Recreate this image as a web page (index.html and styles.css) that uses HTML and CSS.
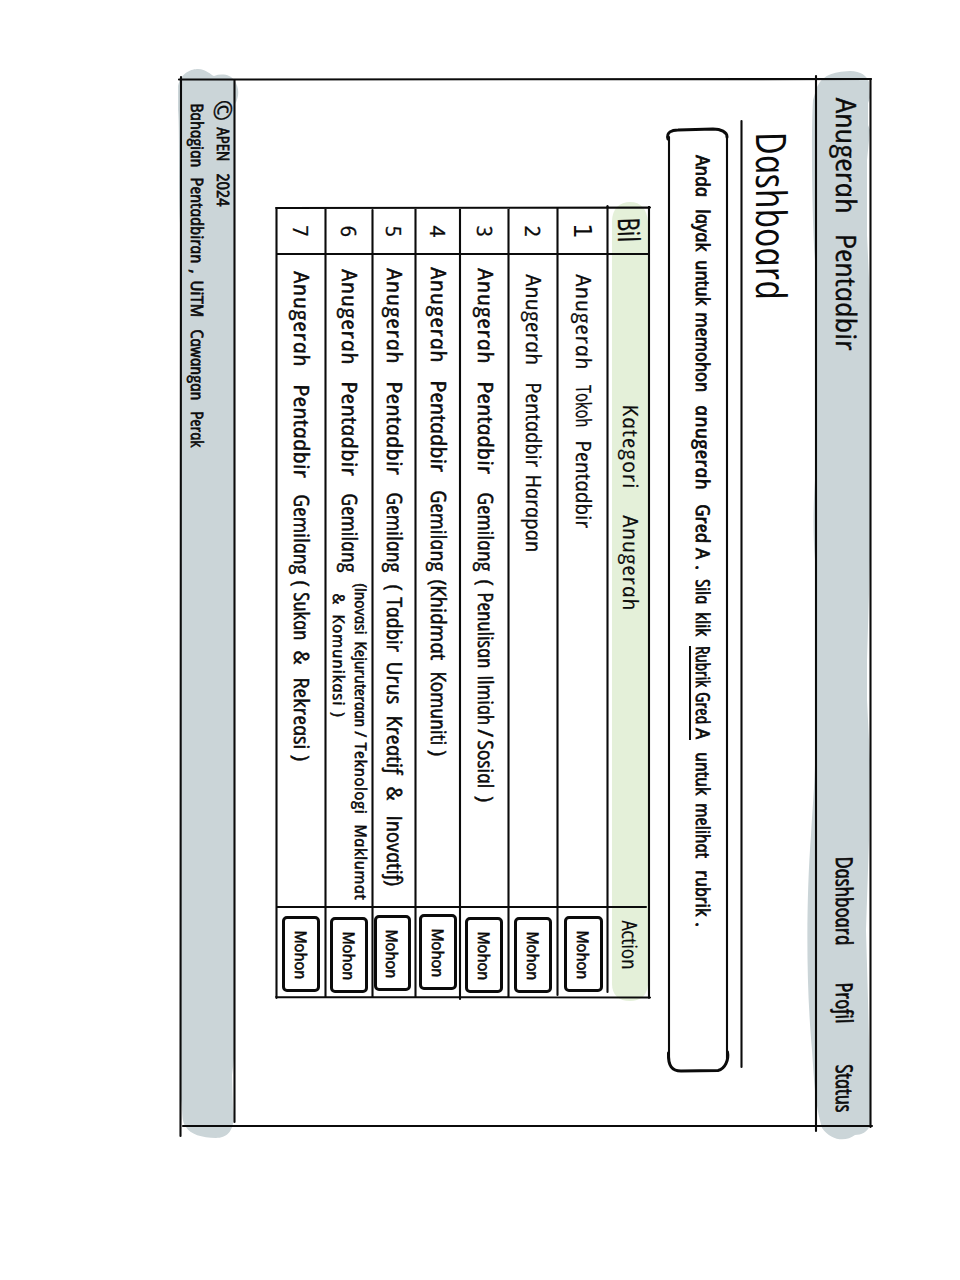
FILE: index.html
```html
<!DOCTYPE html>
<html lang="ms">
<head>
<meta charset="utf-8">
<title>Anugerah Pentadbir</title>
<link rel="stylesheet" href="styles.css">
</head>
<body>
<div class="sheet">
  <svg class="ink" viewBox="0 0 960 1280" aria-hidden="true">
    <g class="wash">
      <path d="M816 90 C821 75 833 72 850 71 C861 71 867 76 869 82 L870 98 L868 103 L868 125 L870 130 L867 160 L867 235 L870 300 V560 L867 660 L867 700 L870 760 L869 840 L866 930 L868 1000 L870 1080 V1125 C868 1132 861 1135 855 1135 C846 1142 831 1141 822 1128 C815 1105 814 1080 812 1050 C806 985 806 900 811 835 C813 800 816 770 815 740 V560 C813 535 813 510 815 480 V260 C812 220 811 130 813 100 Z"/>
      <path d="M178 86 C181 72 192 69 198 69 C206 69 211 75 214 76 C222 73 231 75 234 80 C240 88 239 97 235 104 V1050 L232 1075 L233 1108 C236 1130 228 1138 216 1138 C202 1138 190 1134 186 1127 C181 1122 183 1110 181 1100 V230 C178 215 180 130 178 110 Z"/>
    </g>
    <path class="mint" d="M612 222 C612 208 620 202 630 202 C641 202 647 209 648 222 V985 C647 996 640 1001 630 1001 C619 1001 612 995 612 984 Z"/>
    <g class="rules">
      <path d="M179 79.500 L871 79"/><path d="M183 1126 H872"/><path d="M870.500 79 V1127"/>
      <path d="M816 76 V1131"/><path d="M181 77 L180.500 1136"/><path d="M234.500 80 V1122"/>
      <path d="M741.500 121 V1067"/>
      <path d="M669 137 V1060 M727 137 V1060"/>
      <path d="M276 208 L650 207.500 M277 254 H649 M278 907 H646 M276 997 L650 997.500 M276.500 208 V998 M325.500 208 V997 M372.500 210 V997 M415.500 208 V997 M460 208 V999 M508.500 208 V997 M557.500 208 V995 M607.500 206 V992 M649 207 V998"/>
    </g>
    <g class="heavy">
      <path d="M668 139 C666 132 672 130 678 130 L713 129 C721 129 727 132 727 137"/>
      <path d="M668.500 1053 C668 1066 672 1071 681 1071 L718 1070.500 C725 1069 729 1060 727.500 1052"/>
    </g>
  </svg>

  <header class="topbar">
    <div class="line brand" data-from="79"><span data-y="97-213">Anugerah</span><span data-y="233-350">Pentadbir</span></div>
    <nav class="line nav" data-from="350"><a data-y="856-945">Dashboard</a><a data-y="982-1023">Profil</a><a data-y="1064-1112">Status</a></nav>
  </header>

  <main class="content">
    <h1 class="line heading" data-from="79"><span data-y="131-299">Dashboard</span></h1>
    <p class="line notice" data-from="79"><span data-y="155-197">Anda</span><span data-y="209-251">layak</span><span data-y="260-305">untuk</span><span data-y="312-392">memohon</span><span data-y="405-490">anugerah</span><span data-y="504-543">Gred</span><span data-y="548-560">A</span><span data-y="565-569">.</span><span data-y="579-604">Sila</span><span data-y="612-636">klik</span><a class="link"><span data-y="646-687">Rubrik</span><span data-y="692-724">Gred</span><span data-y="728-740">A</span></a><span data-y="752-795">untuk</span><span data-y="803-858">melihat</span><span data-y="870-916">rubrik</span><span data-y="922-926">.</span></p>

    <section class="grid">
      <div class="row head"><div class="line num" data-from="208"><span data-y="217-246">Bil</span></div><div class="line cat" data-from="254"><span data-y="404-489">Kategori</span><span data-y="515-611">Anugerah</span></div><div class="line act" data-from="907"><span data-y="920-969">Action</span></div></div>
      <div class="row r1 thin"><div class="num"><span>1</span></div><div class="line cat" data-from="254"><span data-y="274-370">Anugerah</span><span data-y="385-427">Tokoh</span><span data-y="440-528">Pentadbir</span></div><div class="act"><button><span>Mohon</span></button></div></div>
      <div class="row r2 thin"><div class="num"><span>2</span></div><div class="line cat" data-from="254"><span data-y="274-365">Anugerah</span><span data-y="382-467">Pentadbir</span><span data-y="474-552">Harapan</span></div><div class="act"><button><span>Mohon</span></button></div></div>
      <div class="row r3"><div class="num"><span>3</span></div><div class="line cat" data-from="254"><span data-y="268-364">Anugerah</span><span data-y="381-474">Pentadbir</span><span data-y="492-571">Gemilang</span><span data-y="579-586">(</span><span data-y="592-668">Penulisan</span><span data-y="675-725">Ilmiah</span><span data-y="729-738">/</span><span data-y="740-788">Sosial</span><span data-y="796-803">)</span></div><div class="act"><button><span>Mohon</span></button></div></div>
      <div class="row r4"><div class="num"><span>4</span></div><div class="line cat" data-from="254"><span data-y="267-363">Anugerah</span><span data-y="380-472">Pentadbir</span><span data-y="490-571">Gemilang</span><span data-y="579-660">(Khidmat</span><span data-y="671-745">Komuniti</span><span data-y="750-757">)</span></div><div class="act"><button><span>Mohon</span></button></div></div>
      <div class="row r5"><div class="num"><span>5</span></div><div class="line cat" data-from="254"><span data-y="268-364">Anugerah</span><span data-y="381-475">Pentadbir</span><span data-y="492-572">Gemilang</span><span data-y="584-591">(</span><span data-y="597-652">Tadbir</span><span data-y="661-704">Urus</span><span data-y="715-774">Kreatif</span><span data-y="786-803">&amp;</span><span data-y="815-886">Inovatif)</span></div><div class="act"><button><span>Mohon</span></button></div></div>
      <div class="row r6"><div class="num"><span>6</span></div><div class="line cat" data-from="254"><span data-y="269-365">Anugerah</span><span data-y="381-476">Pentadbir</span><span data-y="493-572">Gemilang</span><div class="small"><div class="line" data-from="572"><span data-y="583-634">(Inovasi</span><span data-y="641-727">Kejuruteraan</span><span data-y="731-739">/</span><span data-y="742-814">Teknologi</span><span data-y="824-900">Maklumat</span></div><div class="line" data-from="572"><span data-y="593-606">&amp;</span><span data-y="614-706">Komunikasi</span><span data-y="712-718">)</span></div></div></div><div class="act"><button><span>Mohon</span></button></div></div>
      <div class="row r7"><div class="num"><span>7</span></div><div class="line cat" data-from="254"><span data-y="271-367">Anugerah</span><span data-y="384-478">Pentadbir</span><span data-y="494-574">Gemilang</span><span data-y="580-587">(</span><span data-y="592-640">Sukan</span><span data-y="650-667">&amp;</span><span data-y="677-749">Rekreasi</span><span data-y="755-762">)</span></div><div class="act"><button><span>Mohon</span></button></div></div>
    </section>
  </main>

  <footer class="footer">
    <div class="line" data-from="79"><span class="copy" data-y="100-121">©</span><span data-y="127-161">APEN</span><span data-y="173-206">2024</span></div>
    <div class="line" data-from="79"><span data-y="103-167">Bahagian</span><span data-y="177-263">Pentadbiran</span><span data-y="269-273">,</span><span data-y="280-317">UiTM</span><span data-y="329-400">Cawangan</span><span data-y="411-447">Perak</span></div>
  </footer>
</div>
<script src="lettering.js"></script>
</body>
</html>
```
FILE: styles.css
```css
* { box-sizing: border-box; }
body { margin: 0; background: #fff; }

.sheet {
  position: relative;
  width: 960px;
  height: 1280px;
  padding: 79px 89px 0 0;
  overflow: hidden;
  writing-mode: vertical-rl;
  text-orientation: sideways;
  font-family: "Open Sans", "Noto Sans", sans-serif;
  font-style: italic;
  font-size: 21px;
  line-height: 1;
  color: #0b0b0b;
  -webkit-text-stroke: 0.55px #0b0b0b;
}

.ink { position: absolute; left: 0; top: 0; width: 960px; height: 1280px; }
.wash { fill: #cbd5d8; }
.mint { fill: #e4f0d9; }
.rules { fill: none; stroke: #0b0b0b; stroke-width: 2.1; stroke-linecap: round; }
.heavy { fill: none; stroke: #0b0b0b; stroke-width: 3; stroke-linecap: round; }

.topbar, .content, .footer, .row, .line { position: relative; }
.line { display: flex; align-items: center; white-space: nowrap; }
.line > span, .line > a { display: block; flex: none; }

/* The italic has round one-storey letters; the skew stands them upright. */
.num > span, button > span { display: block; transform: skewY(-11deg); }

.topbar { display: flex; width: 55px; height: 1048px; }
.brand { font-size: 28px; height: 271px; padding-left: 7px; -webkit-text-stroke-width: 0.4px; }
.nav { font-size: 23px; padding-left: 2px; -webkit-text-stroke-width: 0.8px; }

.content { width: 581px; height: 1048px; padding-right: 24px; }
.heading {
  margin: 0;
  width: 40px;
  font-size: 42px;
  font-weight: 400;
  -webkit-text-stroke-width: 0;
}
.notice {
  margin: 0 34px 0 0;
  width: 42px;
  height: 1000px;
  padding-left: 11px;
  font-size: 19px;
  -webkit-text-stroke-width: 0.8px;
}
.notice .link { display: flex; padding-left: 2px; border-left: 2px solid #0b0b0b; margin-left: -4px; }

.grid { margin: 129px 27px 0 0; height: 789px; }
.row { display: flex; width: 48px; }
.num { display: flex; height: 46px; align-items: center; justify-content: center; }
.cat { height: 653px; padding-left: 2px; }
.act { display: flex; height: 90px; align-items: center; }
.thin { -webkit-text-stroke-width: 0.3px; }
.row .num { -webkit-text-stroke-width: 0.3px; }

.head { width: 42px; -webkit-text-stroke-width: 0.2px; padding-left: 2px; }
.head .num { font-size: 30px; justify-content: flex-start; }
.r1 { width: 50px; }
.r1 .num { font: 25px/1 "DejaVu Sans", sans-serif; -webkit-text-stroke-width: 0; }
.r1 .num span { transform: none; }
.r2 { width: 49px; }
.r4 { width: 45px; }
.r5 { width: 43px; }
.r6 { width: 47px; }
.r7 { width: 49px; }

.small { width: 44px; font-size: 16px; -webkit-text-stroke-width: 0.6px; }
.small .line { width: 22px; }

button {
  flex: none;
  display: flex;
  align-items: center;
  justify-content: center;
  width: 38px;
  height: 76px;
  margin: 9px 0 0;
  padding: 0;
  border: 3px solid #0b0b0b;
  border-radius: 5px;
  background: #fff;
  color: inherit;
  font: italic 16px/1 "Open Sans", sans-serif;
  letter-spacing: -0.2px;
  writing-mode: vertical-rl;
  text-orientation: sideways;
  -webkit-text-stroke: 0.6px #0b0b0b;
}
.r1 button { width: 39px; margin-left: 2px; }
.r2 button, .r3 button, .r6 button { margin-top: 10px; }
.r4 button { margin-top: 7px; }
.r5 button { width: 37px; margin-right: 3px; margin-top: 8px; }

.footer { width: 54px; height: 1048px; font-size: 17px; -webkit-text-stroke-width: 0.7px; }
.footer .line { width: 26px; padding-left: 2px; }
.footer .copy { font-size: 25px; -webkit-text-stroke-width: 0.3px; }
```
FILE: lettering.js
```js
// Stretches every hand-lettered word so that it fills its own start-end span on the line.
document.querySelectorAll('.line').forEach(function (line) {
  var cursor = Number(line.dataset.from);
  line.querySelectorAll('[data-y]').forEach(function (word) {
    if (word.closest('.line') !== line) return;
    var span = word.dataset.y.split('-').map(Number);
    var natural = word.getBoundingClientRect().height;
    var count = word.textContent.length;
    var size = span[1] - span[0];
    if (count > 1 && size > natural) {
      word.style.letterSpacing = (size - natural) / count + 'px';
      natural = size;
    }
    var scale = count > 1 ? size / natural : 1;
    word.style.height = natural + 'px';
    word.style.marginBottom = size - natural + 'px';
    word.style.transformOrigin = '50% 0';
    word.style.transform = 'skewY(-11deg) scaleY(' + scale + ')';
    word.style.marginTop = span[0] - cursor + 'px';
    cursor = span[1];
  });
});
// The underlined link starts at its first word.
document.querySelectorAll('.link').forEach(function (link) {
  var first = link.firstElementChild;
  link.style.marginTop = first.style.marginTop;
  first.style.marginTop = 0;
});
```
